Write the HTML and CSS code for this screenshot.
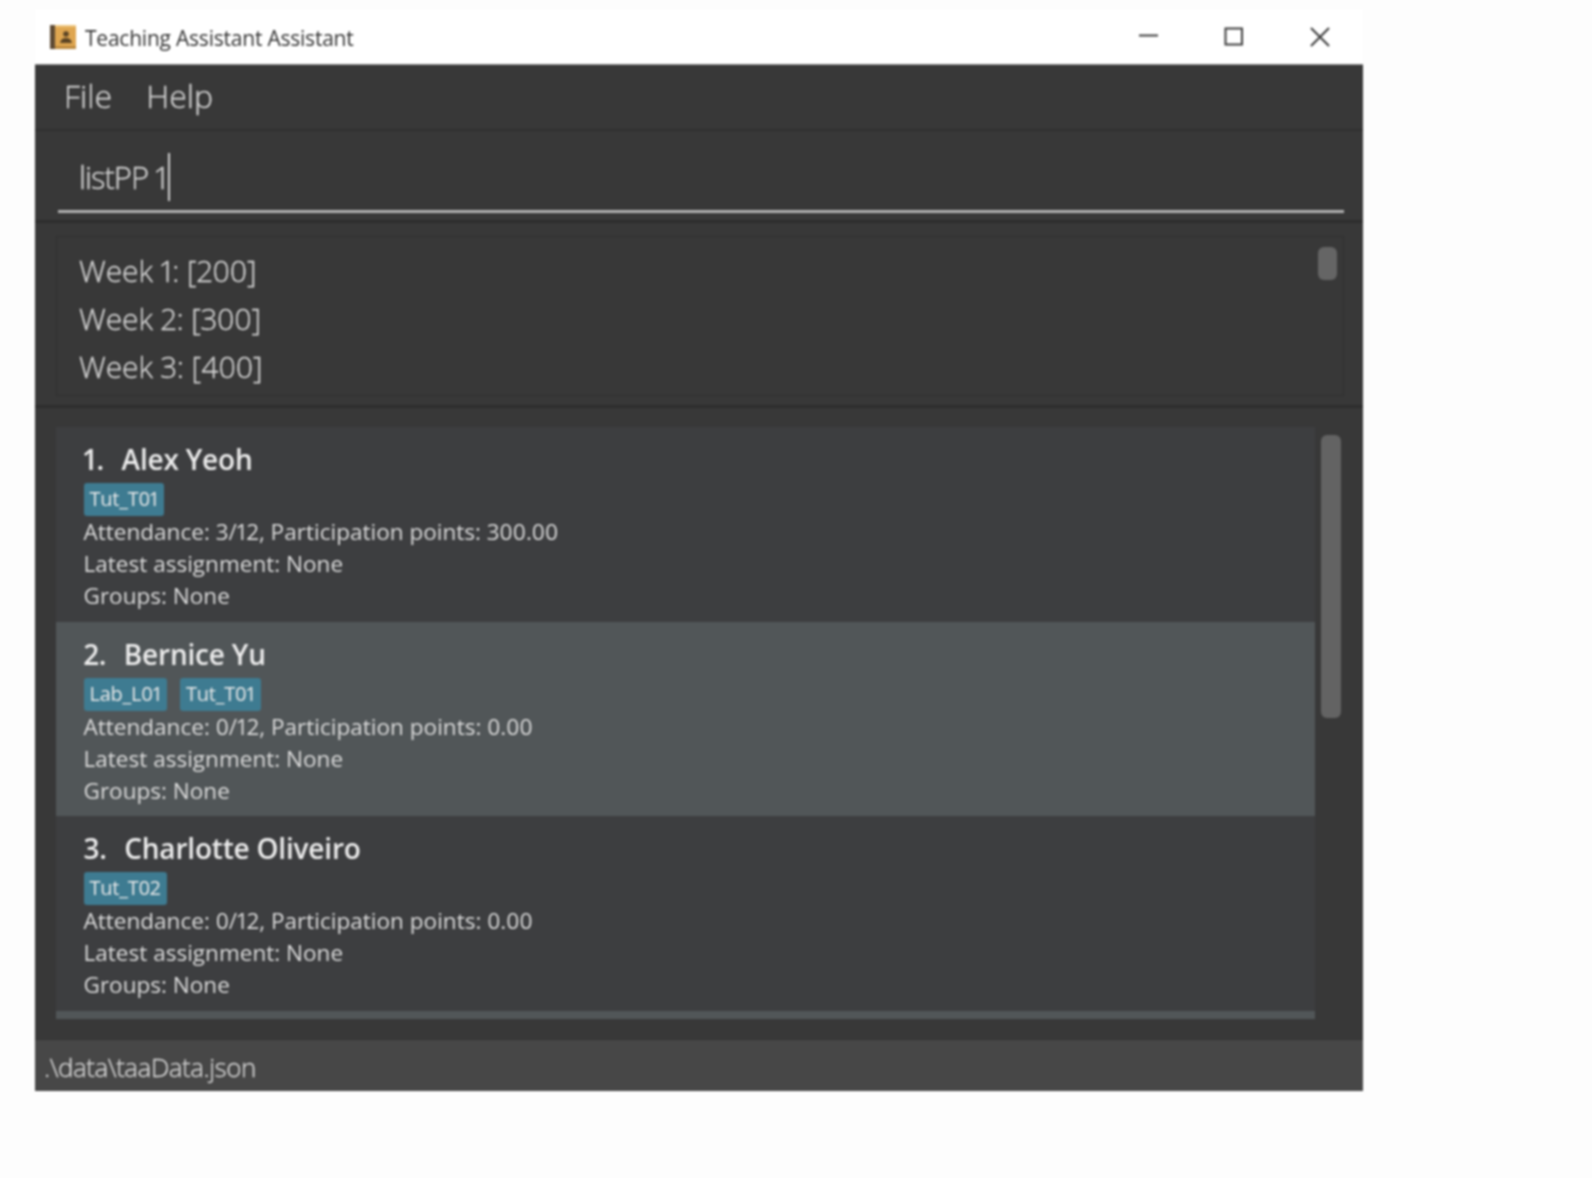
FILE: index.html
```html
<!DOCTYPE html>
<html lang="en">
<head>
<meta charset="utf-8">
<title>Teaching Assistant Assistant</title>
<link rel="stylesheet" href="styles.css">
</head>
<body>
<div class="window">
  <header class="titlebar">
    <svg class="app-icon" viewBox="0 0 26 24" aria-hidden="true">
      <rect width="26" height="24" fill="#dfa650"/>
      <rect width="5" height="24" fill="#5e4a34"/>
      <rect x="5" y="0" width="21" height="2" fill="#eec67f"/>
      <circle cx="16" cy="9" r="2.8" fill="#5b4424"/>
      <path d="M10 18 C11 14 13 13 16 13 C19 13 21 14 22 18 Z" fill="#5b4424"/>
      <rect x="5" y="21" width="21" height="3" fill="#bd8a3f"/>
    </svg>
    <span class="app-title">Teaching Assistant Assistant</span>
    <div class="win-controls">
      <svg class="win-btn" viewBox="0 0 20 20" aria-hidden="true"><path d="M1 8.5H20" /></svg>
      <svg class="win-btn" viewBox="0 0 20 20" aria-hidden="true"><rect x="1.5" y="1.5" width="16.5" height="16"/></svg>
      <svg class="win-btn" viewBox="0 0 20 20" aria-hidden="true"><path d="M1 1L19 19M19 1L1 19"/></svg>
    </div>
  </header>

  <nav class="menubar"><span>File</span><span>Help</span></nav>

  <section class="command">
    <div class="command-input"><span>listPP 1</span><i class="caret"></i></div>
  </section>

  <section class="result">
    <div class="result-box">
      <p>Week 1: [200]</p>
      <p>Week 2: [300]</p>
      <p>Week 3: [400]</p>
      <div class="thumb-small"></div>
    </div>
  </section>

  <section class="list-pane">
    <div class="list">
      <article class="card">
        <h2><span class="num">1.</span>Alex Yeoh</h2>
        <div class="tags"><span>Tut_T01</span></div>
        <p>Attendance: 3/12, Participation points: 300.00</p>
        <p>Latest assignment: None</p>
        <p>Groups: None</p>
      </article>
      <article class="card alt">
        <h2><span class="num">2.</span>Bernice Yu</h2>
        <div class="tags"><span>Lab_L01</span><span>Tut_T01</span></div>
        <p>Attendance: 0/12, Participation points: 0.00</p>
        <p>Latest assignment: None</p>
        <p>Groups: None</p>
      </article>
      <article class="card">
        <h2><span class="num">3.</span>Charlotte Oliveiro</h2>
        <div class="tags"><span>Tut_T02</span></div>
        <p>Attendance: 0/12, Participation points: 0.00</p>
        <p>Latest assignment: None</p>
        <p>Groups: None</p>
      </article>
      <div class="card-peek"></div>
    </div>
    <div class="thumb-large"></div>
  </section>

  <footer class="status">.\data\taaData.json</footer>
</div>
</body>
</html>
```
FILE: styles.css
```css
* { box-sizing: border-box; }
html, body { margin: 0; height: 100%; }
body {
  background: #fdfdfd;
  padding: 9px 0 0 35px;
  font-family: "Open Sans", "Noto Sans", sans-serif;
  font-variant-numeric: proportional-nums;
}
p, h2 { margin: 0; }

.window {
  width: 1328px;
  height: 1082px;
  display: flex;
  flex-direction: column;
  background: #383838;
  filter: blur(0.9px);
}

.titlebar {
  height: 56px;
  flex: none;
  background: #fff;
  display: flex;
  align-items: center;
  padding: 1px 0 0 15px;
  border-bottom: 1px solid #8c8c8c;
}
.app-icon { width: 26px; height: 24px; flex: none; }
.app-title { margin: 2px 0 0 9px; font-size: 21px; color: #333; letter-spacing: -0.22px; }
.win-controls { margin-left: auto; display: flex; gap: 66px; padding-right: 33px; }
.win-btn { width: 20px; height: 20px; fill: none; stroke: #3c3c3c; stroke-width: 2; }

.menubar {
  height: 66px;
  flex: none;
  display: flex;
  align-items: center;
  gap: 34px;
  padding: 0 0 3px 29px;
  font-size: 32px;
  font-weight: 300;
  color: #d4d4d4;
  -webkit-text-stroke: 0.3px #d4d4d4;
  border-bottom: 2px solid #2f2f2f;
}

.command {
  height: 92px;
  flex: none;
  padding: 0 19px 0 23px;
  border-bottom: 3px solid #2d2d2d;
}
.command-input {
  height: 82px;
  display: flex;
  align-items: center;
  padding: 12px 0 0 21px;
  border-bottom: 3px solid #b0b0b0;
  font-size: 31px;
  font-weight: 300;
  color: #d6d6d6;
  -webkit-text-stroke: 0.3px #d6d6d6;
  letter-spacing: -1px;
}
.caret { width: 2px; height: 48px; background: #d0d0d0; margin-left: 2px; }

.result {
  height: 185px;
  flex: none;
  padding: 13px 19px 9px 21px;
  border-bottom: 3px solid #2d2d2d;
}
.result-box {
  position: relative;
  height: 100%;
  padding: 10px 0 0 22px;
  border: 1px solid #2f2f2f;
  font-size: 30px;
  font-weight: 300;
  line-height: 48px;
  color: #d6d6d6;
  -webkit-text-stroke: 0.3px #d6d6d6;
  letter-spacing: -0.1px;
}
.thumb-small {
  position: absolute;
  top: 10px;
  right: 6px;
  width: 19px;
  height: 33px;
  border-radius: 6px;
  background: #656565;
}

.list-pane {
  position: relative;
  height: 632px;
  flex: none;
  padding: 19px 48px 0 21px;
  border-bottom: 1px solid #333;
}
.list { height: 593px; overflow: hidden; }
.card {
  height: 194.6px;
  padding: 12px 0 0 27.5px;
  background: #3d3e40;
  color: #dcdcdc;
  font-size: 22.5px;
  line-height: 32px;
  letter-spacing: 0.02px;
}
.card.alt { background: #515658; }
.card h2 {
  font-size: 28px;
  font-weight: 600;
  line-height: 40px;
  color: #ececec;
  letter-spacing: -0.2px;
  white-space: nowrap;
}
.num { margin-right: 17.5px; }
.card p { white-space: nowrap; }
.tags { display: flex; gap: 13px; margin-top: 4px; }
.tags span {
  height: 33px;
  padding: 0 6px;
  border-radius: 3px;
  background: #3e7b91;
  color: #eaeaea;
  font-size: 20px;
  line-height: 32px;
  letter-spacing: -0.25px;
}
.card-peek { height: 8px; background: #515658; }
.thumb-large {
  position: absolute;
  top: 27px;
  right: 22px;
  width: 20px;
  height: 283px;
  border-radius: 6px;
  background: #636363;
}

.status {
  flex: 1;
  background: #474747;
  padding: 7px 0 0 9px;
  font-size: 26px;
  font-weight: 300;
  line-height: 40px;
  color: #d6d6d6;
  -webkit-text-stroke: 0.3px #d6d6d6;
  letter-spacing: -0.5px;
}
```
